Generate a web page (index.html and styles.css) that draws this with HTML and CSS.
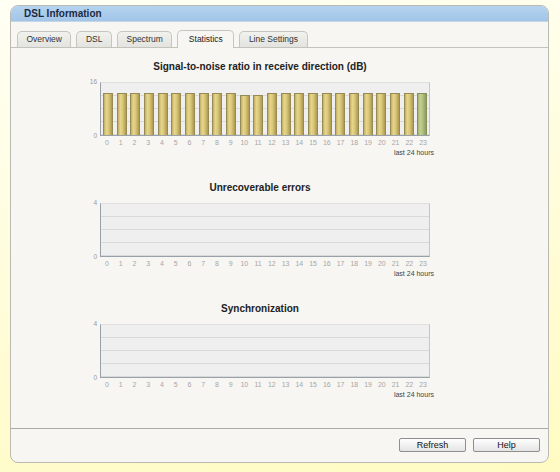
FILE: index.html
```html
<!DOCTYPE html>
<html>
<head>
<meta charset="utf-8">
<title>DSL Information</title>
<link rel="stylesheet" href="styles.css">
</head>
<body>
<div class="panel">
  <div class="panel-header">DSL Information</div>
  <div class="tabs">
    <div class="tab">Overview</div>
    <div class="tab">DSL</div>
    <div class="tab">Spectrum</div>
    <div class="tab active">Statistics</div>
    <div class="tab">Line Settings</div>
  </div>
  <div class="content">
    <section class="chart">
      <h2 class="chart-title">Signal-to-noise ratio in receive direction (dB)</h2>
      <div class="chart-body">
        <div class="yaxis"><span>16</span><span>0</span></div>
        <div class="plot">
          <div class="slot"><div class="bar" style="height:81%"></div></div>
          <div class="slot"><div class="bar" style="height:81%"></div></div>
          <div class="slot"><div class="bar" style="height:81%"></div></div>
          <div class="slot"><div class="bar" style="height:81%"></div></div>
          <div class="slot"><div class="bar" style="height:81%"></div></div>
          <div class="slot"><div class="bar" style="height:81%"></div></div>
          <div class="slot"><div class="bar" style="height:81%"></div></div>
          <div class="slot"><div class="bar" style="height:81%"></div></div>
          <div class="slot"><div class="bar" style="height:81%"></div></div>
          <div class="slot"><div class="bar" style="height:81%"></div></div>
          <div class="slot"><div class="bar" style="height:76%"></div></div>
          <div class="slot"><div class="bar" style="height:76%"></div></div>
          <div class="slot"><div class="bar" style="height:81%"></div></div>
          <div class="slot"><div class="bar" style="height:81%"></div></div>
          <div class="slot"><div class="bar" style="height:81%"></div></div>
          <div class="slot"><div class="bar" style="height:81%"></div></div>
          <div class="slot"><div class="bar" style="height:81%"></div></div>
          <div class="slot"><div class="bar" style="height:81%"></div></div>
          <div class="slot"><div class="bar" style="height:81%"></div></div>
          <div class="slot"><div class="bar" style="height:81%"></div></div>
          <div class="slot"><div class="bar" style="height:81%"></div></div>
          <div class="slot"><div class="bar" style="height:81%"></div></div>
          <div class="slot"><div class="bar" style="height:81%"></div></div>
          <div class="slot"><div class="bar current" style="height:81%"></div></div>
        </div>
      </div>
      <div class="xaxis">
        <span>0</span><span>1</span><span>2</span><span>3</span><span>4</span><span>5</span><span>6</span><span>7</span><span>8</span><span>9</span><span>10</span><span>11</span><span>12</span><span>13</span><span>14</span><span>15</span><span>16</span><span>17</span><span>18</span><span>19</span><span>20</span><span>21</span><span>22</span><span>23</span>
      </div>
      <div class="period">last 24 hours</div>
    </section>

    <section class="chart">
      <h2 class="chart-title">Unrecoverable errors</h2>
      <div class="chart-body">
        <div class="yaxis"><span>4</span><span>0</span></div>
        <div class="plot"></div>
      </div>
      <div class="xaxis">
        <span>0</span><span>1</span><span>2</span><span>3</span><span>4</span><span>5</span><span>6</span><span>7</span><span>8</span><span>9</span><span>10</span><span>11</span><span>12</span><span>13</span><span>14</span><span>15</span><span>16</span><span>17</span><span>18</span><span>19</span><span>20</span><span>21</span><span>22</span><span>23</span>
      </div>
      <div class="period">last 24 hours</div>
    </section>

    <section class="chart">
      <h2 class="chart-title">Synchronization</h2>
      <div class="chart-body">
        <div class="yaxis"><span>4</span><span>0</span></div>
        <div class="plot"></div>
      </div>
      <div class="xaxis">
        <span>0</span><span>1</span><span>2</span><span>3</span><span>4</span><span>5</span><span>6</span><span>7</span><span>8</span><span>9</span><span>10</span><span>11</span><span>12</span><span>13</span><span>14</span><span>15</span><span>16</span><span>17</span><span>18</span><span>19</span><span>20</span><span>21</span><span>22</span><span>23</span>
      </div>
      <div class="period">last 24 hours</div>
    </section>
  </div>
  <div class="footer">
    <button class="btn">Refresh</button>
    <button class="btn">Help</button>
  </div>
</div>
</body>
</html>
```

FILE: styles.css
```css
html, body {
  margin: 0;
  padding: 0;
}
body {
  width: 560px;
  height: 472px;
  overflow: hidden;
  font-family: "Liberation Sans", Arial, sans-serif;
  background: linear-gradient(170deg, #fffff4 0%, #fffde0 40%, #fffbc2 100%);
  padding-top: 5px;
  box-sizing: border-box;
}
.panel {
  margin-left: 10px;
  width: 539px;
  height: 458px;
  box-sizing: border-box;
  border: 1px solid #b9bab2;
  border-radius: 8px;
  background: #f7f6f2;
  display: flex;
  flex-direction: column;
  overflow: hidden;
}
.panel-header {
  height: 16px;
  line-height: 16px;
  padding-left: 13px;
  font-size: 10px;
  font-weight: bold;
  color: #1b2a3f;
  background: linear-gradient(to bottom, #b4d3f0, #a2c5e8);
  border-bottom: 1px solid #c2d6e8;
  box-sizing: border-box;
}
.tabs {
  height: 26px;
  box-sizing: border-box;
  padding: 8px 0 0 6px;
  border-bottom: 1px solid #c3c3bc;
  display: flex;
  align-items: flex-end;
  gap: 5px;
}
.tab {
  height: 16px;
  line-height: 15px;
  box-sizing: border-box;
  padding: 0 8.5px;
  font-size: 8.5px;
  color: #333;
  border: 1px solid #c6c6be;
  border-bottom: none;
  border-radius: 5px 5px 0 0;
  background: linear-gradient(to bottom, #f1f1ed, #e3e3df);
}
.tab.active {
  height: 18px;
  line-height: 17px;
  padding: 0 10.5px;
  margin-bottom: -1px;
  background: #f7f6f2;
  color: #222;
}
.content {
  flex: 1;
  padding-top: 13px;
}
.chart {
  width: 344px;
  margin: 0 0 24px 77px;
}
.chart-title {
  margin: 0;
  font-size: 10px;
  line-height: 12px;
  font-weight: bold;
  text-align: center;
  color: #222;
}
.chart-body {
  display: flex;
  margin-top: 9px;
}
.yaxis {
  width: 12px;
  height: 54px;
  display: flex;
  flex-direction: column;
  justify-content: space-between;
  align-items: flex-end;
  font-size: 6.5px;
  color: #999;
}
.yaxis span {
  line-height: 8px;
  margin: -4px 3px 0 0;
}
.yaxis span:last-child {
  margin: 0 3px -4px 0;
}
.plot {
  width: 330px;
  height: 54px;
  box-sizing: border-box;
  border-top: 1px solid #dfdfe0;
  border-right: 1px solid #c4c6c8;
  border-left: 1px solid #98a0a8;
  border-bottom: 1px solid #98a0a8;
  background-color: #efeff0;
  background-image: linear-gradient(to bottom, transparent 12px, #d9d9dc 12px, #d9d9dc 13px, transparent 13px);
  background-size: 100% 13px;
  display: flex;
  align-items: flex-end;
}
.slot {
  flex: 1;
  height: 100%;
  display: flex;
  justify-content: center;
  align-items: flex-end;
}
.bar {
  width: 10px;
  box-sizing: border-box;
  border: 1px solid #968a55;
  border-bottom: none;
  background: linear-gradient(to right, #c3ad62 0%, #e6d68c 30%, #d8c676 60%, #ae9851 100%);
}
.bar.current {
  border-color: #84925a;
  background: linear-gradient(to right, #a5b474 0%, #c4d090 30%, #b0be7e 60%, #8d9c60 100%);
}
.xaxis {
  display: flex;
  margin-left: 12px;
  width: 330px;
  height: 10px;
  margin-top: 2px;
  font-size: 7px;
  line-height: 10px;
  color: #a6a6a6;
}
.xaxis span {
  flex: 1;
  text-align: center;
}
.period {
  text-align: right;
  font-size: 7px;
  line-height: 10px;
  color: #444;
  margin-right: -2px;
}
.footer {
  height: 34px;
  box-sizing: border-box;
  border-top: 1px solid #a9aaa2;
  display: flex;
  justify-content: flex-end;
  align-items: flex-start;
  gap: 7px;
  padding: 9px 8px 0 0;
}
.btn {
  width: 67px;
  height: 14px;
  padding: 0;
  font-family: "Liberation Sans", Arial, sans-serif;
  font-size: 9px;
  line-height: 12px;
  color: #111;
  border: 1px solid #8e8e8e;
  border-radius: 2px;
  background: linear-gradient(to bottom, #fefefe, #e4e4e4);
}
```
